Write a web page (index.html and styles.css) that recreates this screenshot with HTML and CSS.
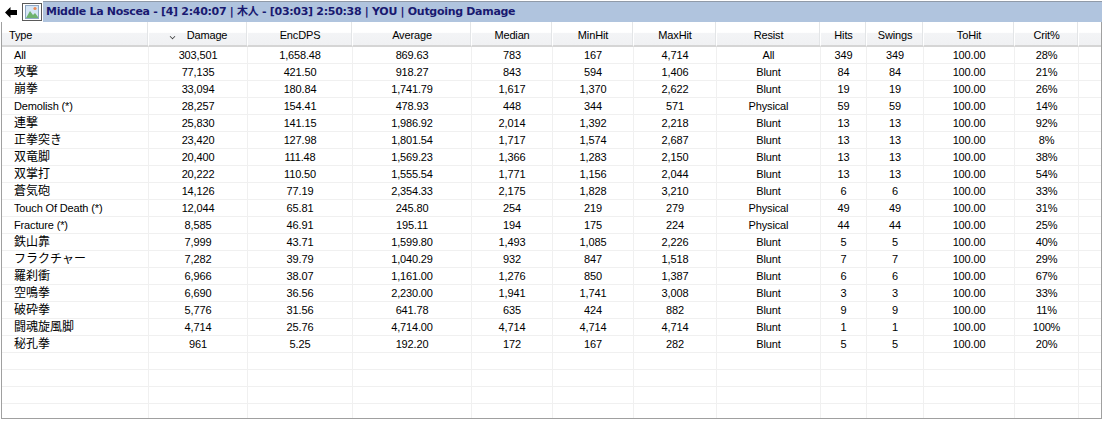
FILE: index.html
```html
<!DOCTYPE html>
<html lang="en">
<head>
    <meta charset="UTF-8">
    <title>Outgoing Damage</title>
    <link rel="stylesheet" href="styles.css">
</head>
<body>
    <div class="window">
        <div class="toolbar">
            <div class="back-btn">
                <svg width="12" height="11" viewBox="0 0 12 11"><path d="M0 5.5 L5.5 0 V3 H12 V8 H5.5 V11 Z" fill="#000"/></svg>
            </div>
            <div class="pic-btn">
                <svg width="14" height="14" viewBox="0 0 14 14">
                    <rect x="0.5" y="0.5" width="13" height="13" fill="#d6e6f6" stroke="#8fa8c4"/>
                    <path d="M1 13 L5 6 L8 10 L10 8 L13 12 V13 Z" fill="#6fb36f"/>
                    <circle cx="10" cy="3.5" r="1.6" fill="#ec8a55"/>
                </svg>
            </div>
            <div class="title">Middle La Noscea - [4] 2:40:07 | 木人 - [03:03] 2:50:38 | YOU | Outgoing Damage</div>
        </div>
        <div class="list">
            <table class="grid">
                <thead>
                    <tr>
                        <th class="type-col">Type</th>
                        <th class="sorted"><span class="sort-arrow"></span>Damage</th>
                        <th>EncDPS</th><th>Average</th><th>Median</th><th>MinHit</th><th>MaxHit</th>
                        <th>Resist</th><th>Hits</th><th>Swings</th><th>ToHit</th><th>Crit%</th><th></th>
                    </tr>
                </thead>
                <tbody>
                    <tr><td>All</td><td>303,501</td><td>1,658.48</td><td>869.63</td><td>783</td><td>167</td><td>4,714</td><td>All</td><td>349</td><td>349</td><td>100.00</td><td>28%</td><td></td></tr>
                    <tr><td class="jp">攻撃</td><td>77,135</td><td>421.50</td><td>918.27</td><td>843</td><td>594</td><td>1,406</td><td>Blunt</td><td>84</td><td>84</td><td>100.00</td><td>21%</td><td></td></tr>
                    <tr><td class="jp">崩拳</td><td>33,094</td><td>180.84</td><td>1,741.79</td><td>1,617</td><td>1,370</td><td>2,622</td><td>Blunt</td><td>19</td><td>19</td><td>100.00</td><td>26%</td><td></td></tr>
                    <tr><td>Demolish (*)</td><td>28,257</td><td>154.41</td><td>478.93</td><td>448</td><td>344</td><td>571</td><td>Physical</td><td>59</td><td>59</td><td>100.00</td><td>14%</td><td></td></tr>
                    <tr><td class="jp">連撃</td><td>25,830</td><td>141.15</td><td>1,986.92</td><td>2,014</td><td>1,392</td><td>2,218</td><td>Blunt</td><td>13</td><td>13</td><td>100.00</td><td>92%</td><td></td></tr>
                    <tr><td class="jp">正拳突き</td><td>23,420</td><td>127.98</td><td>1,801.54</td><td>1,717</td><td>1,574</td><td>2,687</td><td>Blunt</td><td>13</td><td>13</td><td>100.00</td><td>8%</td><td></td></tr>
                    <tr><td class="jp">双竜脚</td><td>20,400</td><td>111.48</td><td>1,569.23</td><td>1,366</td><td>1,283</td><td>2,150</td><td>Blunt</td><td>13</td><td>13</td><td>100.00</td><td>38%</td><td></td></tr>
                    <tr><td class="jp">双掌打</td><td>20,222</td><td>110.50</td><td>1,555.54</td><td>1,771</td><td>1,156</td><td>2,044</td><td>Blunt</td><td>13</td><td>13</td><td>100.00</td><td>54%</td><td></td></tr>
                    <tr><td class="jp">蒼気砲</td><td>14,126</td><td>77.19</td><td>2,354.33</td><td>2,175</td><td>1,828</td><td>3,210</td><td>Blunt</td><td>6</td><td>6</td><td>100.00</td><td>33%</td><td></td></tr>
                    <tr><td>Touch Of Death (*)</td><td>12,044</td><td>65.81</td><td>245.80</td><td>254</td><td>219</td><td>279</td><td>Physical</td><td>49</td><td>49</td><td>100.00</td><td>31%</td><td></td></tr>
                    <tr><td>Fracture (*)</td><td>8,585</td><td>46.91</td><td>195.11</td><td>194</td><td>175</td><td>224</td><td>Physical</td><td>44</td><td>44</td><td>100.00</td><td>25%</td><td></td></tr>
                    <tr><td class="jp">鉄山靠</td><td>7,999</td><td>43.71</td><td>1,599.80</td><td>1,493</td><td>1,085</td><td>2,226</td><td>Blunt</td><td>5</td><td>5</td><td>100.00</td><td>40%</td><td></td></tr>
                    <tr><td class="jp">フラクチャー</td><td>7,282</td><td>39.79</td><td>1,040.29</td><td>932</td><td>847</td><td>1,518</td><td>Blunt</td><td>7</td><td>7</td><td>100.00</td><td>29%</td><td></td></tr>
                    <tr><td class="jp">羅刹衝</td><td>6,966</td><td>38.07</td><td>1,161.00</td><td>1,276</td><td>850</td><td>1,387</td><td>Blunt</td><td>6</td><td>6</td><td>100.00</td><td>67%</td><td></td></tr>
                    <tr><td class="jp">空鳴拳</td><td>6,690</td><td>36.56</td><td>2,230.00</td><td>1,941</td><td>1,741</td><td>3,008</td><td>Blunt</td><td>3</td><td>3</td><td>100.00</td><td>33%</td><td></td></tr>
                    <tr><td class="jp">破砕拳</td><td>5,776</td><td>31.56</td><td>641.78</td><td>635</td><td>424</td><td>882</td><td>Blunt</td><td>9</td><td>9</td><td>100.00</td><td>11%</td><td></td></tr>
                    <tr><td class="jp">闘魂旋風脚</td><td>4,714</td><td>25.76</td><td>4,714.00</td><td>4,714</td><td>4,714</td><td>4,714</td><td>Blunt</td><td>1</td><td>1</td><td>100.00</td><td>100%</td><td></td></tr>
                    <tr><td class="jp">秘孔拳</td><td>961</td><td>5.25</td><td>192.20</td><td>172</td><td>167</td><td>282</td><td>Blunt</td><td>5</td><td>5</td><td>100.00</td><td>20%</td><td></td></tr>
                    <tr class="blank"><td></td><td></td><td></td><td></td><td></td><td></td><td></td><td></td><td></td><td></td><td></td><td></td><td></td></tr>
                    <tr class="blank"><td></td><td></td><td></td><td></td><td></td><td></td><td></td><td></td><td></td><td></td><td></td><td></td><td></td></tr>
                    <tr class="blank"><td></td><td></td><td></td><td></td><td></td><td></td><td></td><td></td><td></td><td></td><td></td><td></td><td></td></tr>
                    <tr class="blank last"><td></td><td></td><td></td><td></td><td></td><td></td><td></td><td></td><td></td><td></td><td></td><td></td><td></td></tr>
                </tbody>
            </table>
        </div>
    </div>
</body>
</html>
```

FILE: styles.css
```css
body {
    margin: 0;
    background: #ffffff;
    font-family: "Liberation Sans", Arial, "Noto Sans CJK JP", sans-serif;
    font-size: 11px;
    color: #000000;
}

.window {
    width: 1103px;
    height: 424px;
    overflow: hidden;
}

.toolbar {
    display: flex;
    height: 22px;
    padding-top: 1px;
    box-sizing: border-box;
}

.back-btn {
    width: 22px;
    height: 21px;
    padding-top: 1px;
    box-sizing: border-box;
    display: flex;
    align-items: center;
    justify-content: center;
}

.pic-btn {
    box-sizing: border-box;
    width: 20px;
    height: 18px;
    margin-top: 2px;
    margin-right: 1px;
    border: 1px solid #5a5a5a;
    display: flex;
    align-items: center;
    justify-content: center;
}

.title {
    flex: 1;
    margin-right: 1px;
    padding-left: 3px;
    background: #b0c4de;
    border-top: 1px solid #909aa8;
    color: #191970;
    font-family: "DejaVu Sans", Verdana, "Noto Sans CJK JP", sans-serif;
    font-size: 11px;
    font-weight: bold;
    letter-spacing: -0.3px;
    line-height: 19px;
}

.list {
    box-sizing: border-box;
    width: 1101px;
    height: 397px;
    margin-left: 1px;
    border-left: 1px solid #a0a0a0;
    border-right: 1px solid #a0a0a0;
    border-bottom: 1px solid #a0a0a0;
    overflow: hidden;
}

.grid {
    table-layout: fixed;
    border-collapse: separate;
    border-spacing: 0;
    width: 1099px;
    letter-spacing: -0.15px;
}

.grid th,
.grid td {
    box-sizing: border-box;
    padding: 0;
    text-align: center;
    white-space: nowrap;
    overflow: hidden;
}

.grid th {
    height: 25px;
    padding-top: 2px;
    font-weight: normal;
    background: linear-gradient(#ffffff 0, #ffffff 45%, #f3f4f6 50%, #f0f1f3 100%);
    border-right: 1px solid #ffffff;
    border-bottom: 2px solid #d5d5d5;
    box-shadow: inset -1px 0 0 #e3e5e7;
}

.grid td {
    height: 17px;
    padding-top: 1px;
    line-height: 15px;
    border-right: 1px solid #f0f0f0;
    border-bottom: 1px solid #f0f0f0;
}

.grid th:nth-child(1), .grid td:nth-child(1) { width: 147px; }
.grid th:nth-child(2), .grid td:nth-child(2) { width: 99px; }
.grid th:nth-child(3), .grid td:nth-child(3) { width: 105px; }
.grid th:nth-child(4), .grid td:nth-child(4) { width: 119px; }
.grid th:nth-child(5), .grid td:nth-child(5) { width: 81px; }
.grid th:nth-child(6), .grid td:nth-child(6) { width: 81px; }
.grid th:nth-child(7), .grid td:nth-child(7) { width: 83px; }
.grid th:nth-child(8), .grid td:nth-child(8) { width: 104px; }
.grid th:nth-child(9), .grid td:nth-child(9) { width: 46px; }
.grid th:nth-child(10), .grid td:nth-child(10) { width: 57px; }
.grid th:nth-child(11), .grid td:nth-child(11) { width: 91px; }
.grid th:nth-child(12), .grid td:nth-child(12) { width: 64px; }

.grid th:last-child,
.grid td:last-child {
    border-right: 0;
    box-shadow: none;
}

.grid th.type-col {
    text-align: left;
    padding-left: 7px;
}

.grid td:first-child {
    text-align: left;
    padding-left: 12px;
}

.grid td.jp {
    padding-top: 0;
    font-size: 12px;
    line-height: 15px;
    letter-spacing: 0;
}

.grid th.sorted {
    position: relative;
    padding-left: 18px;
}

.sort-arrow {
    position: absolute;
    left: 21px;
    top: 12px;
    width: 4px;
    height: 4px;
    border-right: 1px solid #333333;
    border-bottom: 1px solid #333333;
    transform: rotate(45deg) scale(0.8);
}

.grid tr.last td {
    border-bottom: 0;
}
```
